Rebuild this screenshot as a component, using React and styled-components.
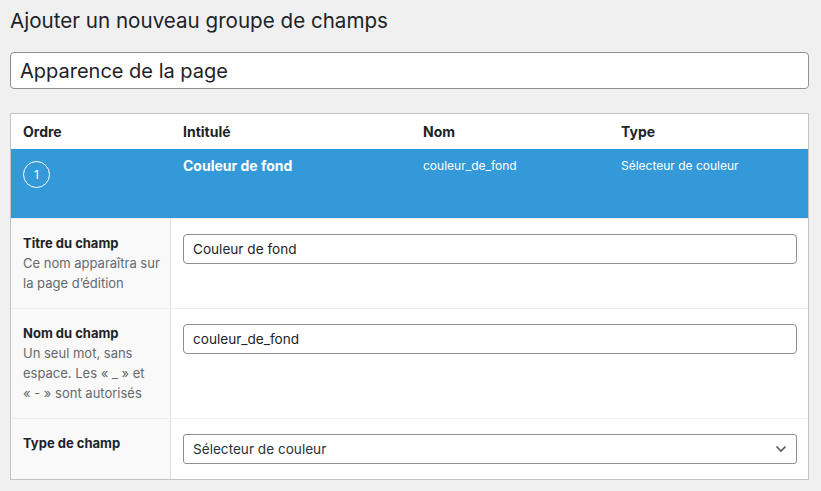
import React from "react";
import styled, { createGlobalStyle } from "styled-components";

const GlobalStyle = createGlobalStyle`
  body {
    margin: 0;
    background: #f0f0f1;
    font-family: Inter, "Noto Sans", sans-serif;
    color: #1d2327;
  }
`;

const champs = [
  {
    label: "Titre du champ",
    desc: ["Ce nom apparaîtra sur", "la page d’édition"],
    value: "Couleur de fond",
  },
  {
    label: "Nom du champ",
    desc: ["Un seul mot, sans", "espace. Les « _ » et", "« - » sont autorisés"],
    value: "couleur_de_fond",
  },
  {
    label: "Type de champ",
    desc: [],
    value: "Sélecteur de couleur",
    select: true,
  },
];

export default function App() {
  return (
    <Page>
      <GlobalStyle />
      <Titre>Ajouter un nouveau groupe de champs</Titre>
      <ChampTitre defaultValue="Apparence de la page" />

      <Panneau>
        <Entete>
          <Colonne>Ordre</Colonne>
          <Colonne>Intitulé</Colonne>
          <Colonne>Nom</Colonne>
          <Colonne>Type</Colonne>
        </Entete>

        <LigneActive>
          <Cellule>
            <Pastille>1</Pastille>
          </Cellule>
          <Cellule $gras>Couleur de fond</Cellule>
          <Cellule>couleur_de_fond</Cellule>
          <Cellule>Sélecteur de couleur</Cellule>
        </LigneActive>

        {champs.map((c) => (
          <Reglage key={c.label}>
            <Etiquette>
              <strong>{c.label}</strong>
              {c.desc.length > 0 && (
                <Description>
                  {c.desc.map((l, i) => (
                    <span key={i}>{l}</span>
                  ))}
                </Description>
              )}
            </Etiquette>
            <Saisie>
              {c.select ? (
                <Selecteur>
                  <span>{c.value}</span>
                  <svg width="12" height="8" viewBox="0 0 12 8">
                    <path
                      d="M1.5 1.5 L6 6 L10.5 1.5"
                      fill="none"
                      stroke="#50575e"
                      strokeWidth="1.6"
                    />
                  </svg>
                </Selecteur>
              ) : (
                <Champ defaultValue={c.value} />
              )}
            </Saisie>
          </Reglage>
        ))}
      </Panneau>
    </Page>
  );
}

/* ---------- STYLES ---------- */
const Page = styled.div`
  padding: 8px 12px 12px 10px;
`;

const Titre = styled.h1`
  margin: 0 0 18px 0;
  font-size: 20.6px;
  font-weight: 400;
  line-height: 26px;
  color: #1d2327;
`;

const ChampTitre = styled.input`
  display: block;
  box-sizing: border-box;
  width: 100%;
  height: 37px;
  padding: 0 9px;
  border: 1px solid #8c8f94;
  border-radius: 4px;
  background: #fff;
  font-family: inherit;
  font-size: 20px;
  color: #1d2327;
  outline: none;
  margin-bottom: 24px;
`;

const Panneau = styled.div`
  background: #fff;
  border: 1px solid #c3c4c7;
`;

const grille = `
  display: grid;
  grid-template-columns: 160px 240px 198px 1fr;
`;

const Entete = styled.div`
  ${grille}
  height: 35px;
  align-items: center;
`;

const Colonne = styled.div`
  padding: 1px 12px 0 12px;
  font-size: 14px;
  font-weight: 700;
  line-height: 20px;
`;

const LigneActive = styled.div`
  ${grille}
  height: 69px;
  background: #3399d9;
  color: #fff;
`;

const Cellule = styled.div`
  padding: 7px 12px 0 12px;
  font-size: ${(p) => (p.$gras ? "14px" : "12px")};
  font-weight: ${(p) => (p.$gras ? 700 : 400)};
  line-height: 20px;
`;

const Pastille = styled.div`
  box-sizing: border-box;
  width: 27px;
  height: 27px;
  margin-top: 5px;
  border: 1.5px solid #fff;
  border-radius: 50%;
  display: flex;
  align-items: center;
  justify-content: center;
  font-size: 12px;
`;

const Reglage = styled.div`
  display: grid;
  grid-template-columns: 160px 1fr;
  border-top: 1px solid #eeeeee;
`;

const Etiquette = styled.div`
  background: #f9f9f9;
  border-right: 1px solid #e1e1e1;
  padding: 14px 12px 15px 12px;
  font-size: 13px;
  line-height: 20px;

  strong {
    display: block;
    font-weight: 700;
    color: #1d2327;
  }
`;

const Description = styled.div`
  color: #646970;
  display: flex;
  flex-direction: column;
  white-space: nowrap;
`;

const Saisie = styled.div`
  padding: 15px 11px 15px 12px;
`;

const Champ = styled.input`
  display: block;
  box-sizing: border-box;
  width: 100%;
  height: 30px;
  padding: 0 9px;
  border: 1px solid #8c8f94;
  border-radius: 4px;
  background: #fff;
  font-family: inherit;
  font-size: 13.6px;
  color: #1d2327;
  outline: none;
`;

const Selecteur = styled.div`
  box-sizing: border-box;
  height: 30px;
  padding: 0 8px 0 9px;
  border: 1px solid #8c8f94;
  border-radius: 3px;
  background: #fff;
  display: flex;
  align-items: center;
  justify-content: space-between;
  font-size: 13.6px;
  color: #2c3338;

  svg {
    margin-right: 1px;
  }
`;
